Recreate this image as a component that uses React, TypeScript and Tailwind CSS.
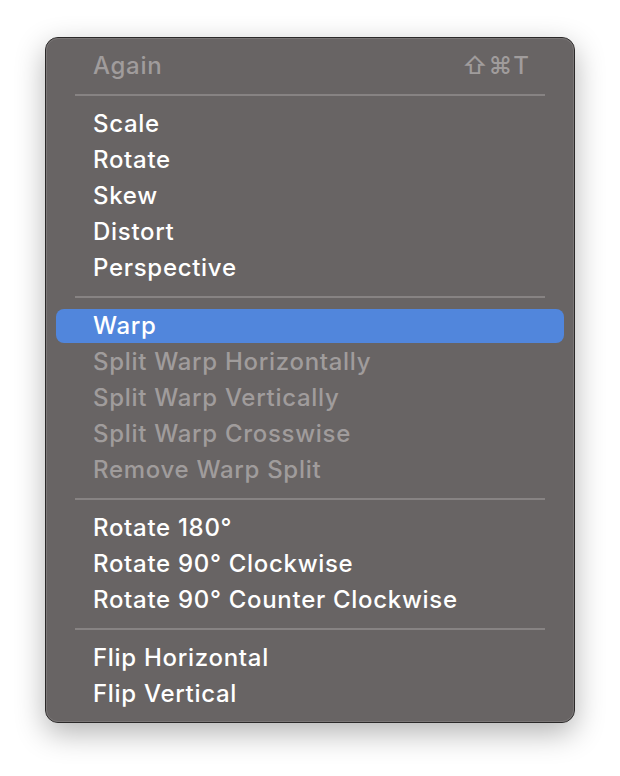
import React from "react";

type Item =
  | { kind: "sep" }
  | { kind: "item"; label: string; disabled?: boolean; active?: boolean; shortcut?: string };

const items: Item[] = [
  { kind: "item", label: "Again", disabled: true, shortcut: "⇧⌘T" },
  { kind: "sep" },
  { kind: "item", label: "Scale" },
  { kind: "item", label: "Rotate" },
  { kind: "item", label: "Skew" },
  { kind: "item", label: "Distort" },
  { kind: "item", label: "Perspective" },
  { kind: "sep" },
  { kind: "item", label: "Warp", active: true },
  { kind: "item", label: "Split Warp Horizontally", disabled: true },
  { kind: "item", label: "Split Warp Vertically", disabled: true },
  { kind: "item", label: "Split Warp Crosswise", disabled: true },
  { kind: "item", label: "Remove Warp Split", disabled: true },
  { kind: "sep" },
  { kind: "item", label: "Rotate 180°" },
  { kind: "item", label: "Rotate 90° Clockwise" },
  { kind: "item", label: "Rotate 90° Counter Clockwise" },
  { kind: "sep" },
  { kind: "item", label: "Flip Horizontal" },
  { kind: "item", label: "Flip Vertical" },
];

export default function App() {
  return (
    <div
      className="w-[620px] h-[776px] bg-white pt-[37px] pl-[45px]"
      style={{ fontFamily: "Inter, 'Liberation Sans', sans-serif" }}
    >
      <div className="w-[530px] rounded-[13px] border border-[#2b2929] bg-[#686464] shadow-[0_10px_30px_rgba(0,0,0,0.3)]">
        <div className="rounded-[12px] border border-[#7a7676] px-[9px] pt-[9px] pb-[9px]">
          {items.map((it, i) =>
            it.kind === "sep" ? (
              <div key={i} className="h-[22px] flex items-center px-[19px]">
                <div className="h-[2px] w-full bg-[#878383]" />
              </div>
            ) : (
              <div
                key={i}
                className={`flex items-center justify-between pl-[37px] pr-[34px] text-[24px] font-medium tracking-[0.7px] ${
                  it.active
                    ? "h-[34px] my-[1px] rounded-[8px] bg-[#5186dc] text-white"
                    : it.disabled
                    ? "h-[36px] text-[#a09c9c]"
                    : "h-[36px] text-white"
                }`}
              >
                <span>{it.label}</span>
                {it.shortcut && <span className="text-[#a09c9c] tracking-[1px]">{it.shortcut}</span>}
              </div>
            )
          )}
        </div>
      </div>
    </div>
  );
}
